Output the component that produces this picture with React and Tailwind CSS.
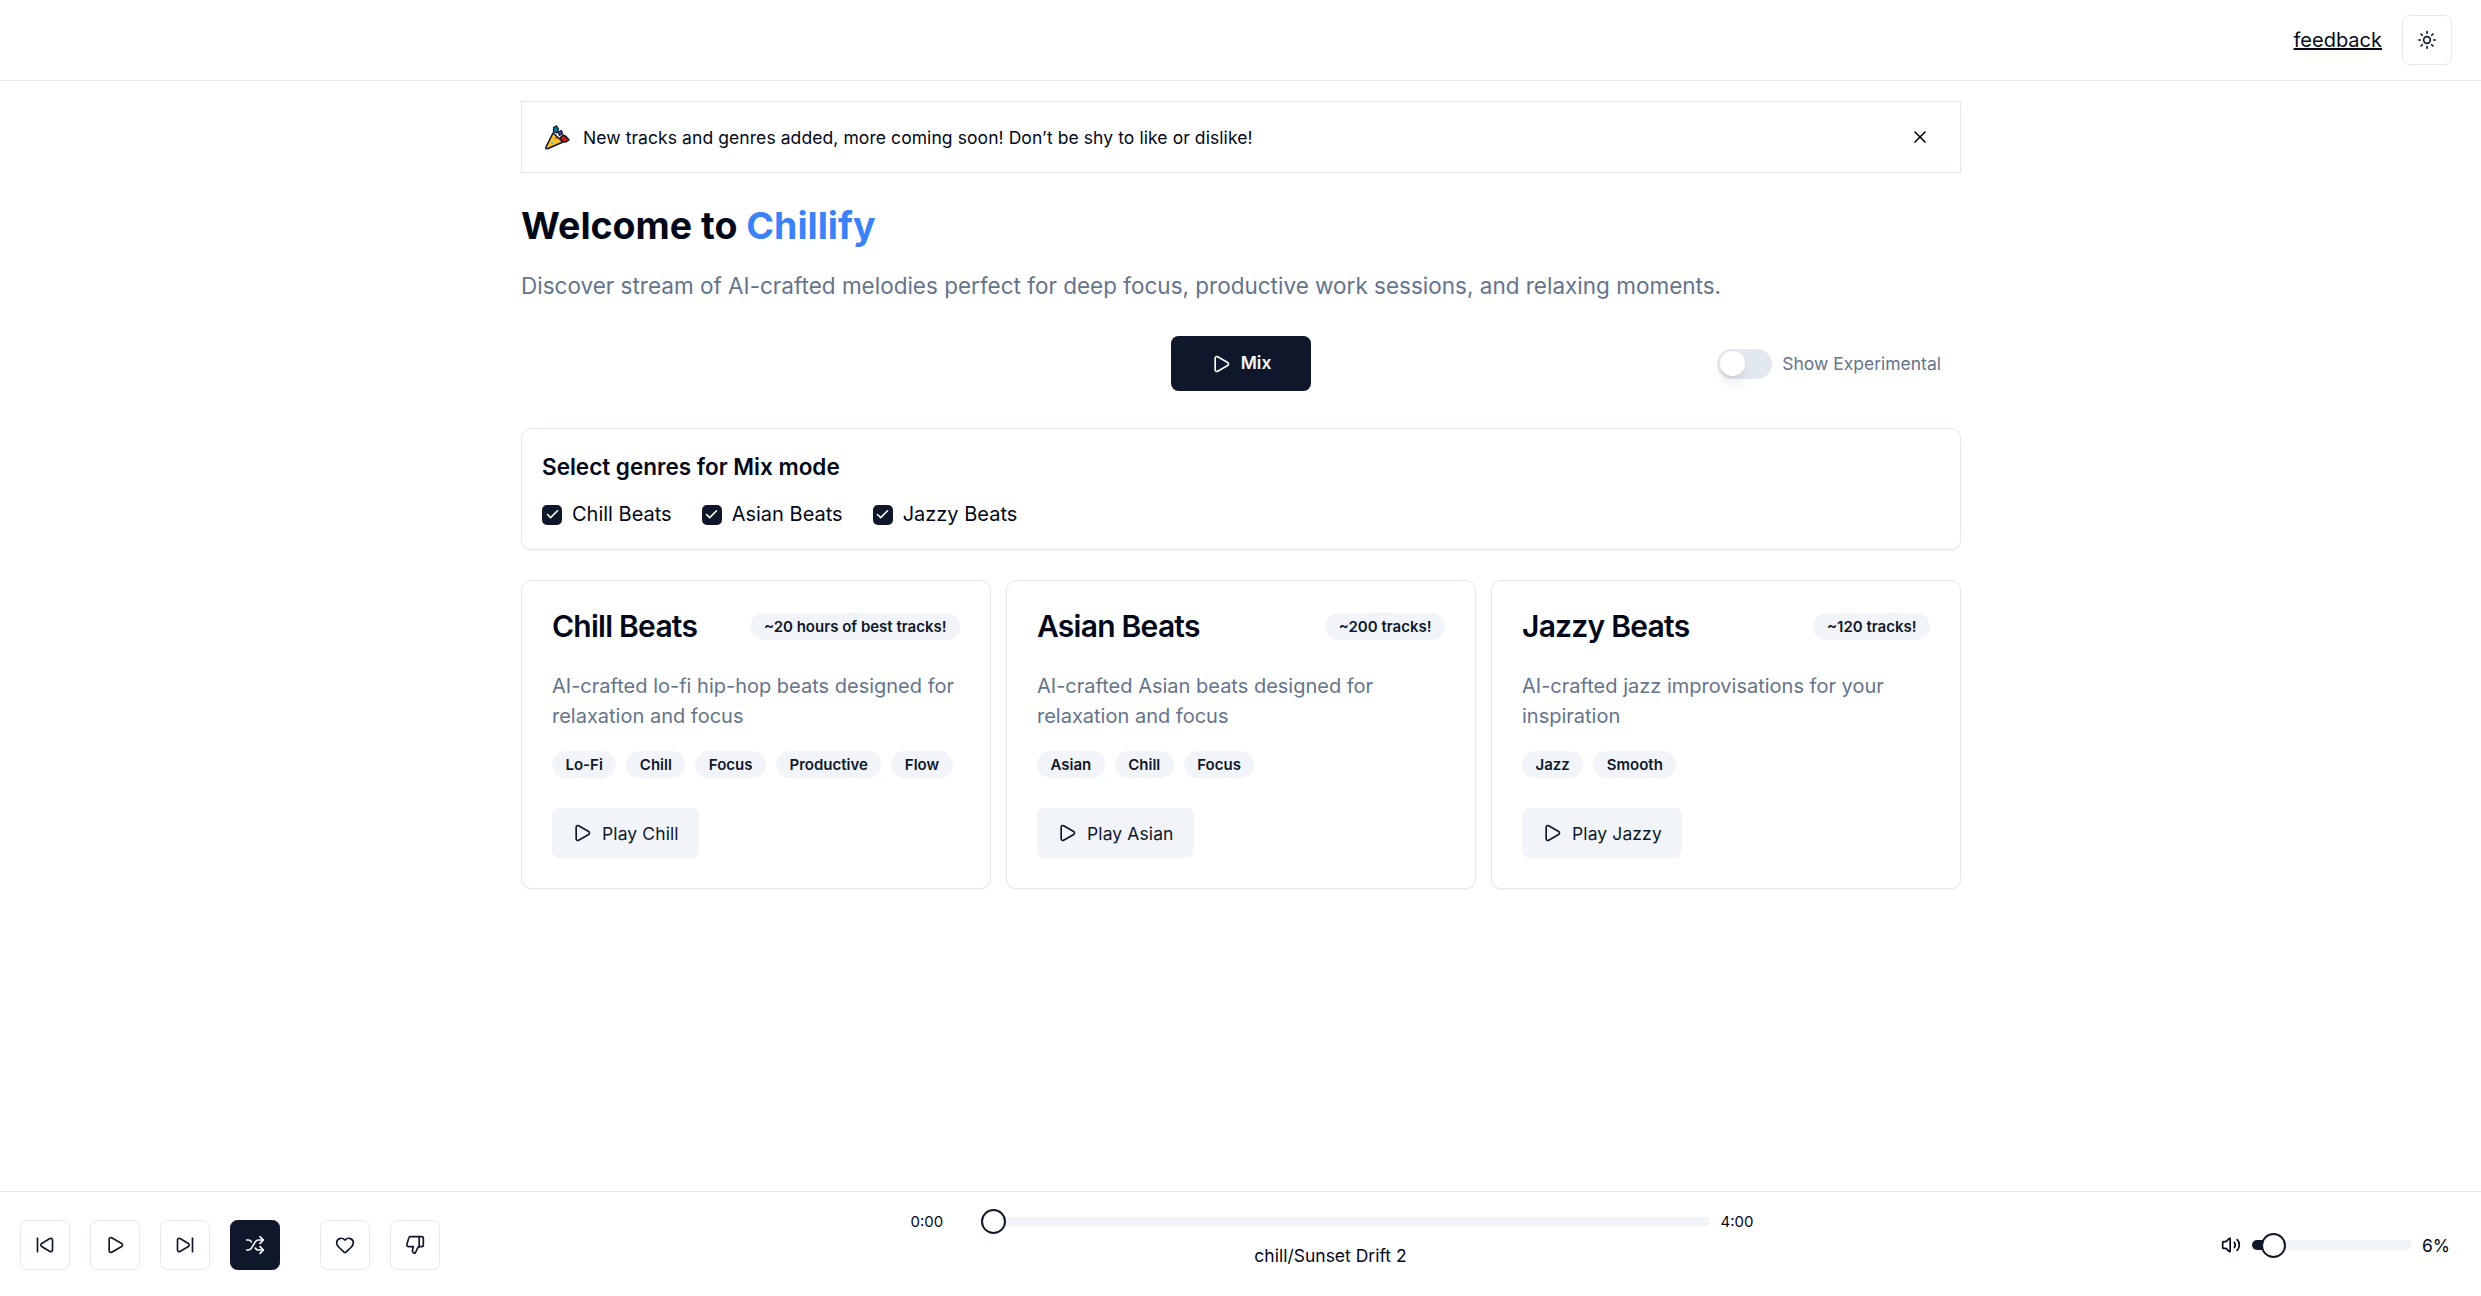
import React from "react";
import { Play, Sun, X, SkipBack, SkipForward, Shuffle, Heart, ThumbsDown, Volume2, Check } from "lucide-react";

function Popper() {
  return (
    <svg width="25" height="25" viewBox="0 0 25 25" className="shrink-0">
      <path d="M8 8 L1 22 Q0.5 24.5 3 23.5 L18 17 Z" fill="#fbbf24" stroke="#0f172a" strokeWidth="1.6" strokeLinejoin="round" />
      <circle cx="7" cy="18" r="1.1" fill="#38bdf8" />
      <circle cx="11" cy="13" r="1" fill="#dc2626" />
      <path d="M8.5 2.5 L11.5 0.8 L13.5 4 L12 8 L8.5 7 Z" fill="#0e7490" stroke="#0f172a" strokeWidth="1.2" strokeLinejoin="round" />
      <path d="M13 7 L16.5 5.5 L17.5 8.5 L14.5 10.5 Z" fill="#4338ca" stroke="#0f172a" strokeWidth="1.1" strokeLinejoin="round" />
      <path d="M15 13 L18 10 L21 11.5 L24 15 L21 17 L17 16.5 Z" fill="#b91c1c" stroke="#0f172a" strokeWidth="1.4" strokeLinejoin="round" />
    </svg>
  );
}

const cards = [
  { title: "Chill Beats", badge: "~20 hours of best tracks!", desc: "AI-crafted lo-fi hip-hop beats designed for relaxation and focus", tags: ["Lo-Fi", "Chill", "Focus", "Productive", "Flow"], play: "Play Chill" },
  { title: "Asian Beats", badge: "~200 tracks!", desc: "AI-crafted Asian beats designed for relaxation and focus", tags: ["Asian", "Chill", "Focus"], play: "Play Asian" },
  { title: "Jazzy Beats", badge: "~120 tracks!", desc: "AI-crafted jazz improvisations for your inspiration", tags: ["Jazz", "Smooth"], play: "Play Jazzy" },
];

function IconButton({ children, active }) {
  return (
    <button className={`flex h-[50px] w-[50px] items-center justify-center rounded-[7.5px] border ${active ? "border-[#0f172a] bg-[#0f172a] text-[#f8fafc]" : "border-[#e2e8f0] bg-white text-[#0f172a]"}`}>
      {children}
    </button>
  );
}

export default function App() {
  return (
    <div className="flex h-screen flex-col bg-white font-['Inter',sans-serif] text-[#020817]">
      <header className="flex h-[81px] shrink-0 items-center justify-end gap-5 border-b border-[#e2e8f0] pr-[29px]">
        <a className="text-[20px] leading-[30px] text-[#020817] underline">feedback</a>
        <IconButton><Sun size={20} strokeWidth={2} /></IconButton>
      </header>

      <main className="flex-1">
        <div className="ml-[521px] w-[1440px] pt-5">
          <div className="flex h-[72px] items-center justify-between border border-[#e2e8f0] pl-[23px] pr-[30px]">
            <div className="flex items-center gap-[13px]">
              <Popper />
              <span className="text-[17.5px] font-normal leading-[25px] tracking-[0.08px]">New tracks and genres added, more coming soon! Don’t be shy to like or dislike!</span>
            </div>
            <X size={20} strokeWidth={2} />
          </div>

          <h1 className="mt-[30px] text-[37.5px] font-bold leading-[45px]">
            Welcome to <span className="text-[#3b82f6]">Chillify</span>
          </h1>
          <p className="mt-[20px] text-[22.5px] leading-[35px] text-[#64748b]">
            Discover stream of AI-crafted melodies perfect for deep focus, productive work sessions, and relaxing moments.
          </p>

          <div className="mt-[33px] grid grid-cols-[1fr_auto_1fr] items-center">
            <div />
            <button className="flex h-[55px] w-[140px] items-center justify-center gap-[10px] rounded-[7.5px] bg-[#0f172a] text-[17.5px] font-semibold text-[#f8fafc]">
              <Play size={20} strokeWidth={2} />
              Mix
            </button>
            <div className="flex items-center justify-end gap-[10px] pr-[20px]">
              <div className="flex h-[30px] w-[55px] items-center rounded-full bg-[#e2e8f0] px-[2.5px]">
                <div className="h-[25px] w-[25px] rounded-full bg-white shadow-lg" />
              </div>
              <span className="text-[17.5px] leading-[25px] text-[#64748b]">Show Experimental</span>
            </div>
          </div>

          <section className="mt-[37px] flex h-[122px] flex-col rounded-[10px] border border-[#e2e8f0] bg-white px-5 pt-[24px] shadow-[0_1px_2px_0_rgba(0,0,0,0.05)]">
            <h2 className="text-[22.5px] font-semibold leading-[28px]">Select genres for Mix mode</h2>
            <div className="mt-[21px] flex gap-[30px]">
              {["Chill Beats", "Asian Beats", "Jazzy Beats"].map((g) => (
                <label key={g} className="flex items-center gap-[10px] text-[20px] leading-[25px] text-[#020817]">
                  <span className="flex h-5 w-5 items-center justify-center rounded-[5px] bg-[#0f172a] text-white">
                    <Check size={15} strokeWidth={2.5} />
                  </span>
                  {g}
                </label>
              ))}
            </div>
          </section>

          <div className="mt-[30px] grid grid-cols-3 gap-[15px]">
            {cards.map((c) => (
              <article key={c.title} className="h-[309px] rounded-[10px] border border-[#e2e8f0] bg-white px-[30px] pt-[30px] shadow-[0_1px_2px_0_rgba(0,0,0,0.05)]">
                <div className="flex items-center justify-between">
                  <h3 className="text-[30px] font-semibold leading-[30px] tracking-[-0.75px]">{c.title}</h3>
                  <span className="rounded-full bg-[#f1f5f9] px-[13.5px] py-[1px] text-[15px] font-semibold leading-[25px] text-[#0f172a]">{c.badge}</span>
                </div>
                <p className="mt-[30px] text-[20px] leading-[30px] text-[#64748b]">{c.desc}</p>
                <div className="mt-[20px] flex gap-[10px]">
                  {c.tags.map((t) => (
                    <span key={t} className="rounded-full bg-[#f1f5f9] px-[13.5px] py-[1px] text-[15px] font-semibold leading-[25px] text-[#0f172a]">{t}</span>
                  ))}
                </div>
                <button className="mt-[30px] flex h-[50px] items-center gap-[10px] rounded-[7.5px] bg-[#f1f5f9] px-5 text-[17.5px] font-normal tracking-[0.11px] text-[#0f172a]">
                  <Play size={20} strokeWidth={2} />
                  <span className="relative top-[1px]">{c.play}</span>
                </button>
              </article>
            ))}
          </div>
        </div>
      </main>

      <footer className="flex h-[105px] shrink-0 items-center border-t border-[#e2e8f0] px-5 pt-[2px]">
        <div className="flex items-center gap-5">
          <IconButton><SkipBack size={20} strokeWidth={2} /></IconButton>
          <IconButton><Play size={20} strokeWidth={2} /></IconButton>
          <IconButton><SkipForward size={20} strokeWidth={2} /></IconButton>
          <IconButton active><Shuffle size={20} strokeWidth={2} /></IconButton>
          <div className="ml-5 flex items-center gap-5">
            <IconButton><Heart size={20} strokeWidth={2} /></IconButton>
            <IconButton><ThumbsDown size={20} strokeWidth={2} /></IconButton>
          </div>
        </div>

        <div className="flex flex-1 flex-col items-center pb-[11px]">
          <div className="ml-[3px] flex w-[843px] items-center gap-[11px] text-[15px] leading-[20px] text-[#020817]">
            <span className="w-[59px]">0:00</span>
            <div className="relative h-[10px] flex-1 rounded-full bg-[#f1f5f9]">
              <div className="absolute left-0 top-[-7.5px] h-[25px] w-[25px] rounded-full border-[2.5px] border-[#0f172a] bg-white" />
            </div>
            <span>4:00</span>
          </div>
          <div className="mt-[11px] text-[17.5px] leading-[25px]">chill/Sunset Drift 2</div>
        </div>

        <div className="flex items-center pr-[1px]">
          <Volume2 size={20} strokeWidth={2} />
          <div className="relative ml-[11px] h-[10px] w-[160px] rounded-full bg-[#f1f5f9]">
            <div className="h-full w-[20px] rounded-full bg-[#0f172a]" />
            <div className="absolute left-[9px] top-[-7.5px] h-[25px] w-[25px] rounded-full border-[2.5px] border-[#0f172a] bg-white" />
          </div>
          <span className="ml-[10px] w-[38px] text-[17.5px] leading-[25px]">6%</span>
        </div>
      </footer>
    </div>
  );
}
